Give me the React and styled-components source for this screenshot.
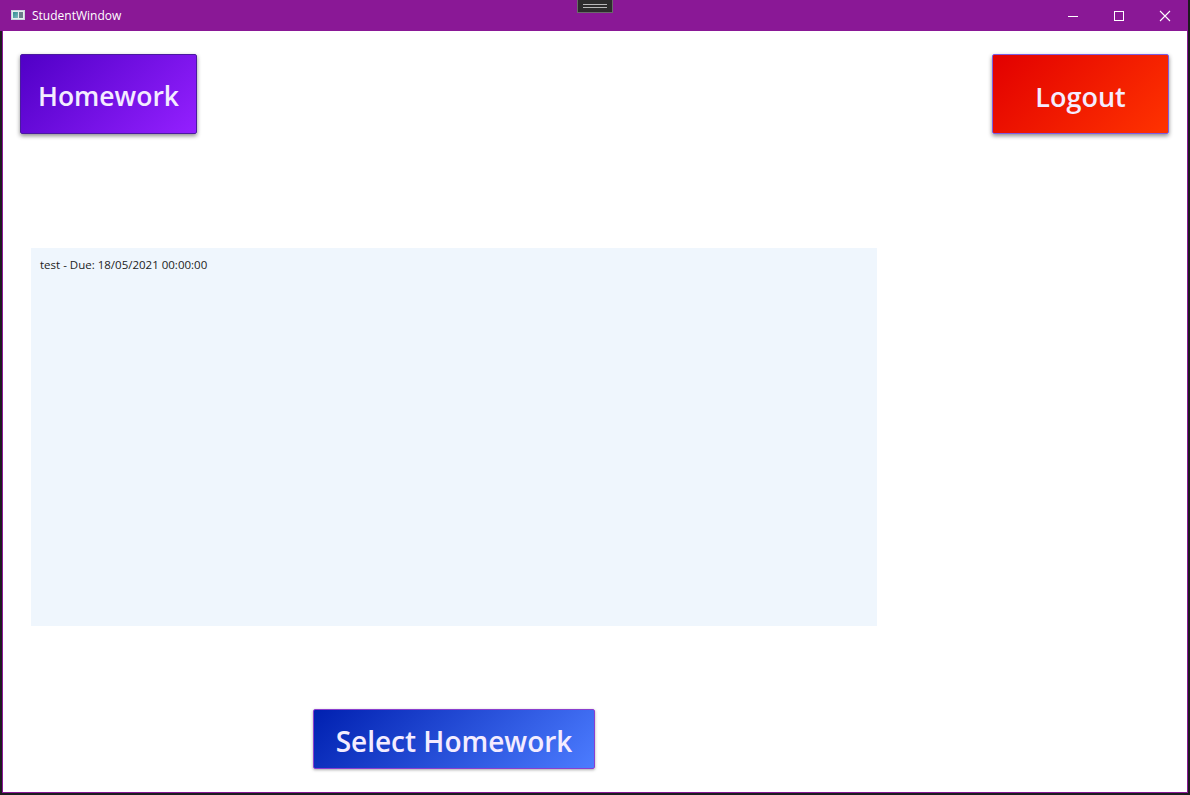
import React from 'react'
import { styled, createGlobalStyle } from 'styled-components'

const homework = [{ id: 1, name: 'test', due: '18/05/2021 00:00:00' }]

const GlobalStyle = createGlobalStyle`
html, body {
    margin: 0;
    padding: 0;
    background: #1d1b1f;
    width: 1190px;
    height: 795px;
    overflow: hidden;
    font-family: "Open Sans", "Noto Sans", sans-serif;
}
`

function StudentWindow() {
    return (
        <Window>
            <TitleBar>
                <AppIcon>
                    <span className="pane" />
                    <span className="side" />
                </AppIcon>
                <Title>StudentWindow</Title>
                <SnapBar><i /><i /></SnapBar>
                <Controls>
                    <ControlButton aria-label="minimize">
                        <svg width="12" height="12" viewBox="0 0 12 12"><path d="M1 6.5h10" stroke="#fff" strokeWidth="1" /></svg>
                    </ControlButton>
                    <ControlButton aria-label="maximize">
                        <svg width="12" height="12" viewBox="0 0 12 12"><rect x="1.5" y="1.5" width="9" height="9" fill="none" stroke="#fff" strokeWidth="1" /></svg>
                    </ControlButton>
                    <ControlButton aria-label="close">
                        <svg width="12" height="12" viewBox="0 0 12 12"><path d="M1 1l10 10M11 1L1 11" stroke="#fff" strokeWidth="1.1" /></svg>
                    </ControlButton>
                </Controls>
            </TitleBar>
            <Content>
                <TopRow>
                    <BigButton $from="#5000c6" $to="#9420ff" $edge="#4a1aa0" $size="26.5px">Homework</BigButton>
                    <BigButton $from="#e20000" $to="#ff3300" $edge="#7d5de0">Logout</BigButton>
                </TopRow>
                <HomeworkList>
                    {homework.map((item) => (
                        <ListItem key={item.id}>{item.name} - Due: {item.due}</ListItem>
                    ))}
                </HomeworkList>
                <BottomRow>
                    <SelectButton $from="#0020b0" $to="#4c7cff" $edge="#8a3fcf">Select Homework</SelectButton>
                </BottomRow>
            </Content>
        </Window>
    )
}

export default function App() {
    return (
        <>
            <GlobalStyle />
            <StudentWindow />
        </>
    )
}

const Window = styled.div`
width: 1186px;
height: 793px;
margin-left: 2px;
box-sizing: border-box;
background: #ffffff;
border: 1px solid #8a1896;
border-top: none;
display: flex;
flex-direction: column;
`

const TitleBar = styled.div`
position: relative;
height: 31px;
margin: 0 -1px 0 -3px;
background: #8a1896;
display: flex;
align-items: center;
padding-left: 11px;
flex-shrink: 0;
`

const AppIcon = styled.div`
width: 14px;
height: 10px;
border: 1px solid #c9d6dc;
background: #e8eef0;
display: flex;
gap: 1px;
padding: 1px;
box-sizing: border-box;
margin-top: -1px;
.pane {
    flex: 1;
    background: linear-gradient(135deg, #2f8f8f, #7fb7c0);
}
.side {
    width: 4px;
    background: #6d7f8c;
}
`

const Title = styled.span`
margin-left: 7px;
color: #ffffff;
font-size: 12px;
font-family: "Open Sans", "Noto Sans", sans-serif;
`

const SnapBar = styled.div`
position: absolute;
left: 577px;
top: 0;
width: 36px;
height: 13px;
box-sizing: border-box;
background: #2c2c2c;
border: 1px solid #6a6a6a;
border-top: none;
display: flex;
flex-direction: column;
align-items: center;
justify-content: center;
gap: 2px;
i {
    display: block;
    width: 24px;
    height: 1px;
    background: #b8b8b8;
}
`

const Controls = styled.div`
margin-left: auto;
display: flex;
height: 100%;
`

const ControlButton = styled.div`
width: 46px;
height: 100%;
display: flex;
align-items: center;
justify-content: center;
`

const Content = styled.div`
flex: 1;
display: flex;
flex-direction: column;
padding: 23px 18px 0 17px;
`

const BigButton = styled.button`
width: 177px;
height: 80px;
border: 1px solid ${(p) => p.$edge};
border-radius: 2px;
background: linear-gradient(135deg, ${(p) => p.$from}, ${(p) => p.$to});
color: #f4ecff;
font-family: "Open Sans", "Noto Sans", sans-serif;
font-weight: 600;
font-size: ${(p) => p.$size || '27px'};
box-shadow: 0 2px 4px rgba(0, 0, 0, 0.45);
cursor: pointer;
padding: 4px 0 0;
`

const SelectButton = styled(BigButton)`
width: 282px;
height: 60px;
font-size: 28px;
box-shadow: 0 1px 3px rgba(0, 0, 0, 0.35);
`

const TopRow = styled.div`
display: flex;
justify-content: space-between;
`

const HomeworkList = styled.div`
margin: 114px 0 0 11px;
width: 846px;
height: 378px;
background: #eff6fd;
padding: 10px 0 0 9px;
box-sizing: border-box;
`

const ListItem = styled.div`
font-family: "Open Sans", "Noto Sans", sans-serif;
font-size: 11.5px;
color: #222;
line-height: 14px;
`

const BottomRow = styled.div`
margin: 83px 0 0 293px;
display: flex;
`
